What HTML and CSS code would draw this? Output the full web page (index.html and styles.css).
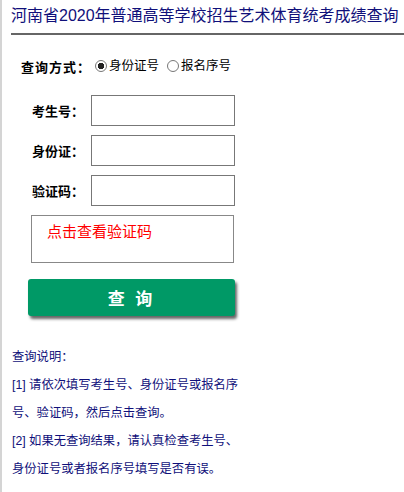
FILE: index.html
```html
<!DOCTYPE html>
<html lang="zh-CN">
  <head>
    <meta charset="UTF-8" />
    <meta name="viewport" content="width=device-width, initial-scale=1.0" />
    <title>河南省2020年普通高等学校招生艺术体育统考成绩查询</title>
    <link rel="stylesheet" href="styles.css">
  </head>
  <body>
    <div class="page">
      <h1 class="title">河南省2020年普通高等学校招生艺术体育统考成绩查询</h1>

      <form class="query-form">
        <div class="type-row">
          <span class="type-label">查询方式：</span>
          <label class="choice"><input type="radio" name="qtype" checked />身份证号</label>
          <label class="choice"><input type="radio" name="qtype" />报名序号</label>
        </div>

        <div class="field">
          <label class="field-label">考生号：</label>
          <input class="field-input" type="text" />
        </div>
        <div class="field">
          <label class="field-label">身份证：</label>
          <input class="field-input" type="text" />
        </div>
        <div class="field">
          <label class="field-label">验证码：</label>
          <input class="field-input" type="text" />
        </div>

        <div class="captcha">点击查看验证码</div>

        <button type="button" class="submit">查&nbsp;询</button>
      </form>

      <div class="notes">
        <p>查询说明：</p>
        <p>[1] 请依次填写考生号、身份证号或报名序号、验证码，然后点击查询。</p>
        <p>[2] 如果无查询结果，请认真检查考生号、身份证号或者报名序号填写是否有误。</p>
      </div>
    </div>
  </body>
</html>
```

FILE: styles.css
```css
body {
  margin: 0;
  background-color: #fff;
  font-family: "Liberation Sans", "Noto Sans CJK SC", sans-serif;
}
.page {
  border-left: 2px solid #d4d4d4;
  min-height: 492px;
  box-sizing: border-box;
}
.title {
  margin: 0 0 0 9px;
  padding: 4px 0 5px 0;
  font-size: 16px;
  font-weight: normal;
  line-height: 24px;
  color: #10107a;
  border-bottom: 2px solid #666;
  white-space: nowrap;
}
.query-form {
  margin-top: 21px;
}
.type-row {
  display: flex;
  align-items: center;
  height: 20px;
  padding-left: 19px;
  font-size: 12px;
  color: #000;
}
.type-label {
  flex-shrink: 0;
  width: 74px;
  font-size: 13px;
  font-weight: bold;
  letter-spacing: 1px;
  white-space: nowrap;
}
.choice {
  display: flex;
  align-items: center;
  margin-right: 8px;
  font-size: 12.5px;
  line-height: 20px;
  white-space: nowrap;
}
.choice input {
  appearance: none;
  -webkit-appearance: none;
  width: 12px;
  height: 12px;
  margin: 0 2px 0 0;
  border: 1px solid #777;
  border-radius: 50%;
  background: #fff;
}
.choice input:checked {
  background: radial-gradient(circle, #222 0 3px, #fff 3.5px);
}
.field {
  display: flex;
  align-items: center;
  margin-top: 19px;
}
.field + .field {
  margin-top: 9px;
}
.field-label {
  width: 82px;
  text-align: right;
  font-size: 13px;
  font-weight: bold;
  color: #000;
}
.field-input {
  margin-left: 7px;
  width: 144px;
  height: 31px;
  box-sizing: border-box;
  border: 1px solid #777;
  padding: 0 4px;
  font-size: 13px;
}
.captcha {
  margin: 9px 0 0 29px;
  width: 203px;
  height: 48px;
  box-sizing: border-box;
  border: 1px solid #888;
  padding: 5px 0 0 15px;
  font-size: 15px;
  line-height: 22px;
  color: #ff0000;
  cursor: pointer;
}
.submit {
  display: block;
  margin: 16px 0 0 26px;
  width: 207px;
  height: 37px;
  border: 0;
  border-radius: 3px;
  background-color: #009966;
  box-shadow: 2px 3px 3px #666;
  color: #fff;
  font-family: inherit;
  font-size: 17px;
  font-weight: bold;
  letter-spacing: 3px;
  cursor: pointer;
}
.notes {
  margin: 27px 0 0 10px;
  width: 230px;
  font-size: 12.3px;
  line-height: 28px;
  color: #10107a;
}
.notes p {
  margin: 0;
}
```
